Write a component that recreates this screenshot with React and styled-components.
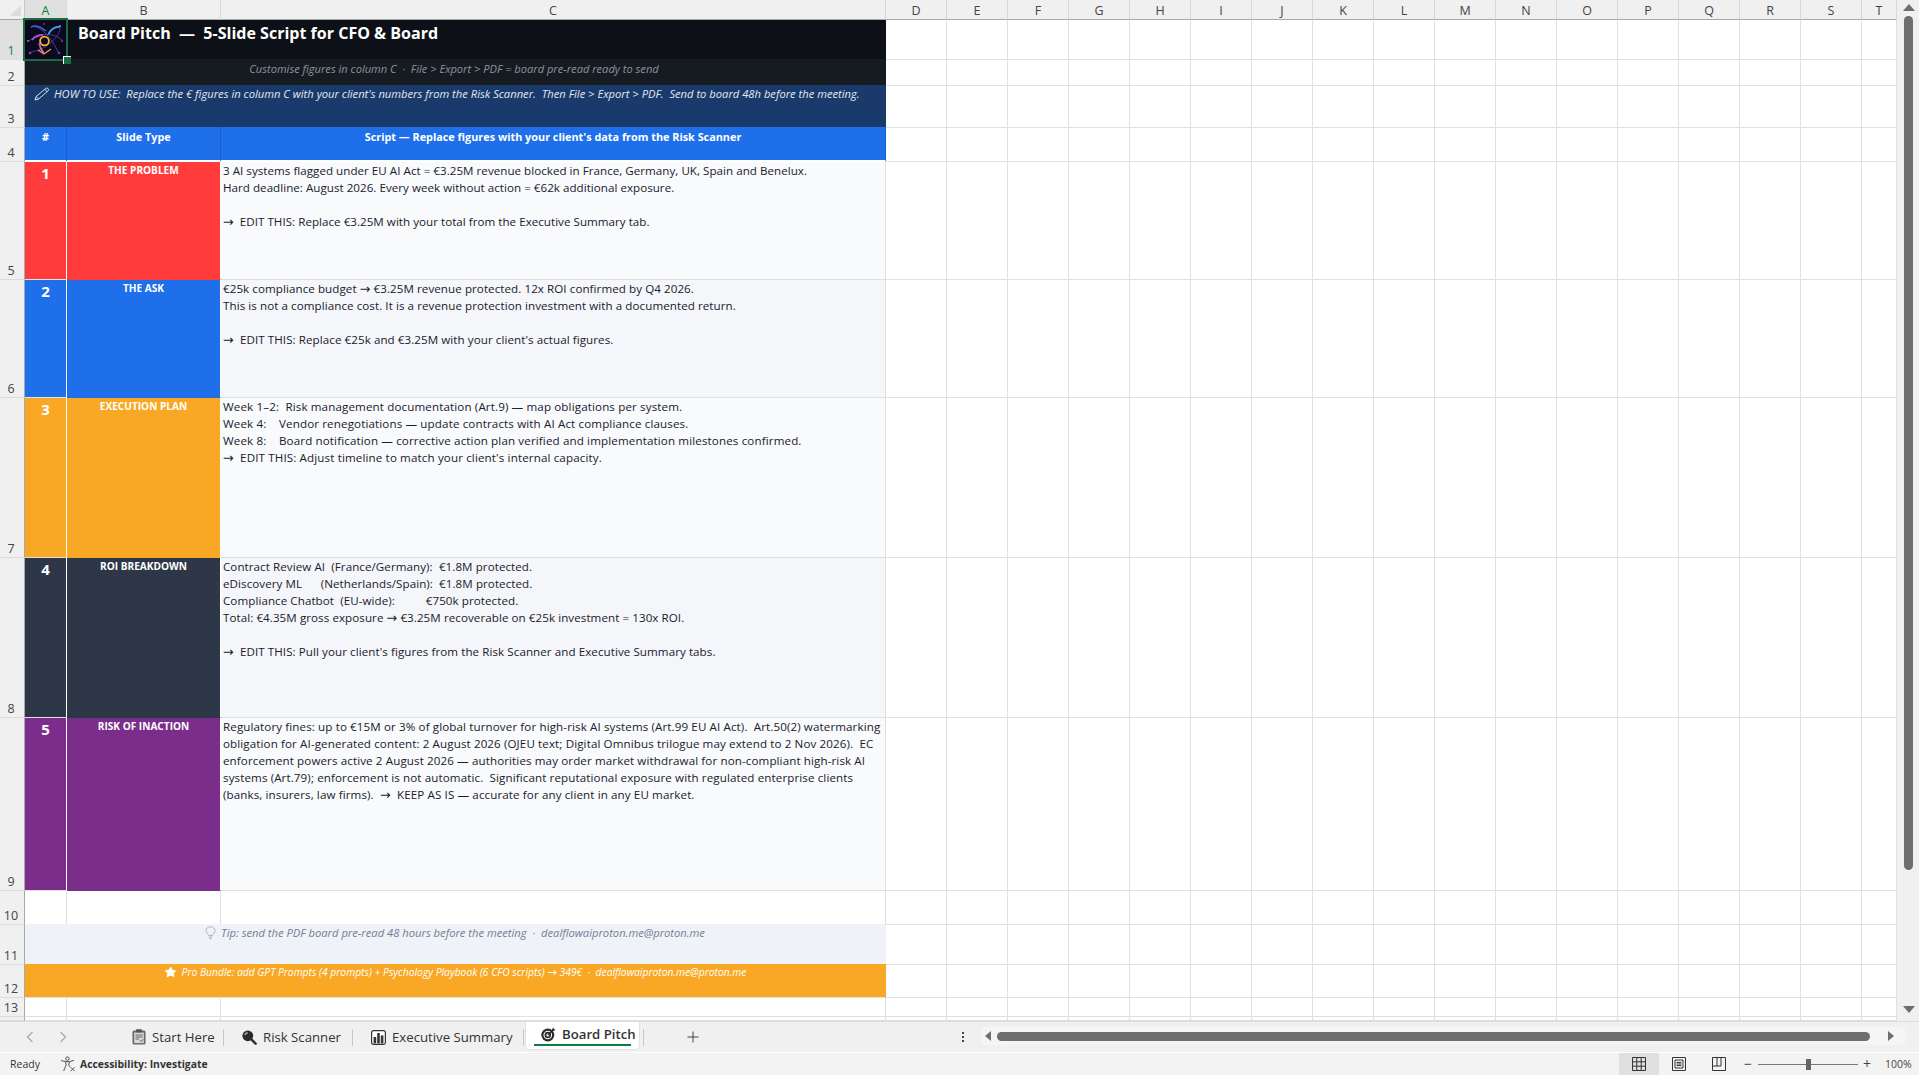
import React from "react";
import styled, { createGlobalStyle } from "styled-components";

const GlobalStyle = createGlobalStyle`
  html, body { margin: 0; padding: 0; background: #fff; }
  body { font-family: "Open Sans", "Noto Sans", "Liberation Sans", sans-serif; overflow: hidden; }
  * { box-sizing: border-box; }
`;

const GRID = "#e0e0e0";
const EMPTY_COLS = "DEFGHIJKLMNOPQRST".split("");

const Page = styled.div`
  width: 1919px;
  height: 1075px;
  display: flex;
  flex-direction: column;
  overflow: hidden;
  color: #1f1f1f;
`;

const Main = styled.div`
  height: 1021px;
  display: flex;
  background: #f0f0f0;
`;

const Sheet = styled.div`
  width: 1897px;
  display: flex;
  flex-direction: column;
  background: #fff;
`;

const Row = styled.div`
  display: flex;
  flex: none;
  height: ${p => p.$h}px;
`;

const Corner = styled.div`
  width: 25px;
  background: #f0f0f0;
  border-right: 1px solid #c8c8c8;
  border-bottom: 1px solid #a8a8a8;
  position: relative;
  &::after {
    content: "";
    position: absolute;
    right: 3px;
    bottom: 3px;
    border-style: solid;
    border-width: 0 0 11px 11px;
    border-color: transparent transparent #dcdcdc transparent;
  }
`;

const ColHead = styled.div`
  width: ${p => p.$w}px;
  background: ${p => (p.$active ? "#e0e0e0" : "#f0f0f0")};
  border-right: 1px solid #d8d8d8;
  border-bottom: 1px solid #a8a8a8;
  color: ${p => (p.$active ? "#107c41" : "#444")};
  font-size: 12.5px;
  line-height: 19px;
  padding-top: 1px;
  text-align: center;
`;

const RowHead = styled.div`
  width: 25px;
  flex: none;
  background: ${p => (p.$active ? "#e0e0e0" : "#f0f0f0")};
  border-right: 1px solid #a8a8a8;
  border-bottom: 1px solid #dcdcdc;
  color: ${p => (p.$active ? "#107c41" : "#444")};
  font-size: 12.5px;
  line-height: 16px;
  display: flex;
  align-items: flex-end;
  justify-content: center;
  padding: 0 2px 0 0;
`;

const Cell = styled.div`
  width: ${p => p.$w}px;
  flex: none;
  position: relative;
  background: ${p => p.$bg || "#fff"};
  border-right: 1px solid ${p => p.$line || GRID};
  border-bottom: 1px solid ${p => p.$under || GRID};
`;

/* merged A:C rows paint over the grid line of the row above */
const Band = styled(Cell)`
  margin-top: -1px;
  border-right-color: ${p => p.$bg};
  border-bottom-color: ${p => p.$under || p.$bg};
  color: ${p => p.$color || "#fff"};
  font-size: ${p => p.$size || 11.2}px;
  font-style: italic;
  line-height: 14px;
  text-align: center;
  white-space: pre;
  padding-top: ${p => p.$top || 0}px;
`;

const Subtitle = styled(Band)`
  font-size: 11.1px;
  padding-right: 2px;
`;

const Selection = styled.div`
  position: absolute;
  left: -2px;
  top: -2px;
  width: 45px;
  height: 43px;
  border: 2px solid #1d6b42;
  z-index: 2;
  &::after {
    content: "";
    position: absolute;
    right: -5px;
    bottom: -5px;
    width: 7px;
    height: 7px;
    background: #1d6b42;
    border-left: 1px solid #fff;
    border-top: 1px solid #fff;
  }
`;

const LogoBox = styled.div`
  width: 41px;
  height: 39px;
  background: #0a0a1c;
  margin-top: 1px;
`;

const Title = styled.div`
  color: #fff;
  font-size: 16.05px;
  font-weight: 700;
  line-height: 21px;
  padding: 3px 0 0 11px;
  white-space: pre;
`;

const HowTo = styled(Band)`
  display: flex;
  align-items: flex-start;
  padding: 2px 0 0 9px;
  text-align: left;
  gap: 4px;
`;

const HeadLabel = styled(Cell)`
  margin-top: -1px;
  color: #fff;
  font-size: 10.85px;
  font-weight: 700;
  line-height: 14px;
  text-align: center;
  padding-top: 3px;
  border-bottom: 2px solid #fff;
`;

const Num = styled(Cell)`
  color: #fff;
  font-size: 15px;
  font-weight: 700;
  line-height: 20px;
  text-align: center;
  padding-top: 1px;
  border-right-color: #fff;
`;

const Kind = styled(Cell)`
  color: #fff;
  font-size: 10.1px;
  font-weight: 700;
  line-height: 14px;
  text-align: center;
  padding-top: 1px;
  border-bottom-color: ${p => p.$bg};
`;

const Script = styled(Cell)`
  color: #1a202c;
  font-size: 11.6px;
  padding-left: 2px;
  letter-spacing: ${p => p.$track}px;
`;

const ScriptLine = styled.div`
  height: 17px;
  line-height: 17px;
  white-space: pre;
`;

const Arrow = styled.span`
  font-family: "DejaVu Sans", sans-serif;
  font-size: 1.1em;
  line-height: 1;
`;

const Inline = styled.span`
  display: inline-flex;
  align-items: center;
  justify-content: center;
  gap: 5px;
`;

const VBar = styled.div`
  width: 22px;
  display: flex;
  flex-direction: column;
  align-items: center;
  padding: 4px 0 0 1px;
  background: #f0f0f0;
`;

const ArrowUp = styled.div`
  border-style: solid;
  border-width: 0 6px 7px 6px;
  border-color: transparent transparent #6e6e6e transparent;
`;

const ArrowDown = styled(ArrowUp)`
  border-width: 7px 6px 0 6px;
  border-color: #6e6e6e transparent transparent transparent;
  margin-top: 136px;
`;

const VThumb = styled.div`
  width: 9px;
  height: 854px;
  margin-top: 5px;
  border-radius: 5px;
  background: #6e6e6e;
`;

const TabBar = styled.div`
  height: 32px;
  display: flex;
  align-items: stretch;
  background: #f0f0f0;
  border-top: 1px solid #dcdcdc;
  border-bottom: 1px solid #fff;
`;

const NavBtns = styled.div`
  width: 127px;
  display: flex;
  align-items: center;
  padding-left: 26px;
  gap: 25px;
  color: #a0a0a0;
`;

const Tab = styled.div`
  width: ${p => p.$w}px;
  display: flex;
  align-items: center;
  gap: 6px;
  padding-left: ${p => p.$pad}px;
  font-size: 13.2px;
  color: #333;
  position: relative;
  &::after {
    content: "";
    position: absolute;
    right: 0;
    top: 7px;
    height: 17px;
    width: 1px;
    background: #c8c8c8;
  }
`;

const ActiveTab = styled.div`
  width: 115px;
  height: 28px;
  margin-left: 1px;
  display: flex;
  align-items: center;
  gap: 6px;
  padding: 0 0 3px 15px;
  background: #fff;
  border: 1px solid #e2e2e2;
  border-top: 0;
  border-radius: 0 0 5px 5px;
  font-size: 13.2px;
  font-weight: 600;
  color: #333;
  position: relative;
  &::after {
    content: "";
    position: absolute;
    left: 8px;
    bottom: 3px;
    width: 97px;
    height: 2px;
    background: #107c41;
  }
`;

const TabEnd = styled.div`
  width: 1px;
  height: 17px;
  margin: 7px 0 0 3px;
  background: #c8c8c8;
`;

const AddTab = styled.div`
  width: 307px;
  padding-left: 43px;
  display: flex;
  align-items: center;
`;

const Dots = styled.div`
  width: 24px;
  display: flex;
  flex-direction: column;
  align-items: center;
  justify-content: center;
  gap: 2px;
  span {
    width: 2px;
    height: 2px;
    background: #444;
  }
`;

const HBar = styled.div`
  width: 925px;
  height: 18px;
  margin: 5px 0 0 6px;
  display: flex;
  align-items: center;
  padding-left: 4px;
  background: #f5f5f5;
  border-radius: 5px;
`;

const ArrowLeft = styled.div`
  border-style: solid;
  border-width: 5px 6px 5px 0;
  border-color: transparent #6e6e6e transparent transparent;
`;

const ArrowRight = styled.div`
  border-style: solid;
  border-width: 5px 0 5px 6px;
  border-color: transparent transparent transparent #6e6e6e;
  margin-left: 18px;
`;

const HThumb = styled.div`
  width: 873px;
  height: 9px;
  margin-left: 6px;
  border-radius: 5px;
  background: #6e6e6e;
`;

const Status = styled.div`
  height: 22px;
  display: flex;
  align-items: stretch;
  background: #f3f3f3;
  font-size: 10px;
  color: #333;
`;

const Ready = styled.div`
  width: 60px;
  padding-left: 10px;
  line-height: 23px;
  font-size: 10.5px;
`;

const Access = styled.div`
  width: 1559px;
  display: flex;
  align-items: center;
  gap: 4px;
  font-weight: 700;
  font-size: 10.4px;
`;

const ViewBtn = styled.div`
  width: 40px;
  display: flex;
  align-items: center;
  justify-content: center;
  background: ${p => (p.$on ? "#e0e0e0" : "transparent")};
`;

const Zoom = styled.div`
  flex: 1;
  display: flex;
  align-items: center;
  padding-left: 5px;
  color: #444;
  font-size: 10.5px;
`;

const ZoomSign = styled.span`
  font-size: 14px;
  line-height: 14px;
`;

const Track = styled.div`
  width: 100px;
  height: 1px;
  margin: 0 5px 0 6px;
  background: #777;
  position: relative;
`;

const Knob = styled.div`
  position: absolute;
  left: 48px;
  top: -5px;
  width: 5px;
  height: 11px;
  background: #666;
`;

const Pct = styled.div`
  margin-left: 14px;
`;

const PencilIcon = () => (
  <svg width="16" height="14" viewBox="0 0 16 14" fill="none" stroke="#e8eefa" strokeWidth="0.9">
    <path d="M1 13 L2 9.6 L11.6 1.6 C12.4 1 13.4 1 14.1 1.6 C14.8 2.4 14.7 3.2 14 3.9 L4.6 12 Z M2 9.6 L4.6 12 M10.8 2.4 L13.2 4.6" />
  </svg>
);

const BulbIcon = () => (
  <svg width="11" height="14" viewBox="0 0 11 14" fill="none" stroke="#a9b4c4" strokeWidth="1">
    <path d="M3.6 9.6 C3.6 8 1 7 1 4.4 C1 2.2 3 .8 5.4 .8 C8 .8 10 2.4 10 4.6 C10 7 7.4 8 7.4 9.6 Z M3.8 11.2 H7.2 M4.4 12.8 H6.6" />
  </svg>
);

const StarIcon = () => (
  <svg width="13" height="12" viewBox="0 0 13 12" fill="#fff">
    <path d="M6.8 .4 L8.7 3.9 L12.6 4.4 L9.8 7.2 L10.6 11.3 L6.6 9.4 L2.7 11.4 L3.3 7.2 L.4 4.5 L4.6 3.8 Z" />
  </svg>
);

const ClipIcon = () => (
  <svg width="14" height="16" viewBox="0 0 14 16">
    <rect x="0.5" y="1.5" width="13" height="14" rx="1.5" fill="#666" />
    <rect x="2.2" y="3.5" width="9.6" height="10.6" fill="#d9d9d9" />
    <rect x="4" y="0.3" width="6" height="3.2" rx="0.8" fill="#555" />
    <path d="M3.5 6 H10.5 M3.5 8 H10.5 M3.5 10 H7" stroke="#666" strokeWidth="1" />
    <path d="M8 11.5 L9 12.6 L11 10.4" stroke="#555" strokeWidth="1" fill="none" />
  </svg>
);

const LensIcon = () => (
  <svg width="15" height="15" viewBox="0 0 15 15">
    <circle cx="5.8" cy="5.8" r="5.4" fill="#2b2b2b" />
    <path d="M3 5 C3.2 3.6 4.4 2.8 5.8 2.8" stroke="#bbb" strokeWidth="1.3" fill="none" />
    <path d="M9.6 9.6 L13.6 13.6" stroke="#333" strokeWidth="2.6" strokeLinecap="round" />
  </svg>
);

const ChartIcon = () => (
  <svg width="15" height="15" viewBox="0 0 15 15">
    <rect x="0.6" y="0.6" width="13.8" height="13.8" rx="1.8" fill="#fff" stroke="#333" strokeWidth="1.2" />
    <rect x="2.6" y="7" width="2.6" height="6.4" fill="#333" />
    <rect x="6.2" y="3" width="2.6" height="10.4" fill="#333" />
    <rect x="9.8" y="5.4" width="2.6" height="8" fill="#333" />
  </svg>
);

const TargetIcon = () => (
  <svg width="15" height="15" viewBox="0 0 15 15">
    <circle cx="6.8" cy="8" r="6.5" fill="#2a2a2a" />
    <circle cx="6.8" cy="8" r="3.8" fill="none" stroke="#fff" strokeWidth="1.1" />
    <circle cx="6.8" cy="8" r="1.5" fill="#fff" />
    <path d="M7 8 L12.4 2.6" stroke="#2a2a2a" strokeWidth="1.4" />
    <path d="M11 2.2 L12.4 .6 L12.8 2.2 L14.6 2.6 L13 4 L11.4 3.8 Z" fill="#2a2a2a" />
  </svg>
);

const AccessIcon = () => (
  <svg width="16" height="16" viewBox="0 0 16 16" fill="none" stroke="#444" strokeWidth="0.9">
    <circle cx="7.4" cy="2.6" r="1.7" />
    <path d="M1 4.6 L5.6 5.6 H9.4 L14 4.4 M5.6 5.6 L6.2 9 L3.6 15 M9.4 5.6 L8.8 9 L9.8 11" />
    <path d="M10.6 11.2 L14.6 15.2 M14.6 11.2 L10.6 15.2" />
  </svg>
);

const Chevron = ({ dir }) => (
  <svg width="8" height="12" viewBox="0 0 8 12" fill="none" stroke="#a6a6a6" strokeWidth="1.2">
    <path d={dir === "left" ? "M6.5 1 L1.5 6 L6.5 11" : "M1.5 1 L6.5 6 L1.5 11"} />
  </svg>
);

const PlusIcon = () => (
  <svg width="12" height="12" viewBox="0 0 12 12" stroke="#444" strokeWidth="1">
    <path d="M6 0.5 V11.5 M0.5 6 H11.5" />
  </svg>
);

const GridIcon = () => (
  <svg width="14" height="14" viewBox="0 0 14 14" fill="none" stroke="#333" strokeWidth="1">
    <path d="M.5 .5 H13.5 V13.5 H.5 Z M.5 4.8 H13.5 M.5 9.2 H13.5 M4.8 .5 V13.5 M9.2 .5 V13.5" />
  </svg>
);

const PageIcon = () => (
  <svg width="14" height="14" viewBox="0 0 14 14" fill="none" stroke="#333" strokeWidth="1">
    <path d="M.5 .5 H13.5 V13.5 H.5 Z M3 3 H11 V11 H3 Z M4.6 5.4 H9.4 M4.6 7 H9.4 M4.6 8.6 H9.4" />
  </svg>
);

const BreakIcon = () => (
  <svg width="14" height="14" viewBox="0 0 14 14" fill="none" stroke="#333" strokeWidth="1">
    <path d="M.5 .5 H13.5 V13.5 H.5 Z M.5 9 H9 V.5 M5 .5 V9" />
  </svg>
);

const Logo = () => (
  <svg width="41" height="39" viewBox="0 0 41 39" fill="none">
    <defs>
      <linearGradient id="pinkArc" x1="0" y1="0" x2="0" y2="1">
        <stop offset="0" stopColor="#a24be0" />
        <stop offset="1" stopColor="#f08a70" />
      </linearGradient>
    </defs>
    <path d="M6 6 C14 3 27 17 33 31" stroke="#3c4fb8" strokeWidth="0.9" />
    <path d="M6 6 C10 4 16 6 21 10" stroke="#4660d4" strokeWidth="1.6" />
    <path d="M35 6 C36 16 20 29 6 31" stroke="#4b3aa8" strokeWidth="0.9" />
    <path d="M35 6 C30 5 25 9 23 14" stroke="#46a6ee" strokeWidth="1.7" />
    <path d="M4 20 C12 13 26 10 37 19" stroke="#5e3aa8" strokeWidth="0.9" />
    <path d="M7 19 C10 15 14 14 18 14" stroke="#a452d8" strokeWidth="1.8" />
    <path d="M19 33 L13 29 M19 33 L26 28" stroke="#ef8f6a" strokeWidth="1.5" />
    <path d="M14 22 C15 27 17 30 19 33" stroke="url(#pinkArc)" strokeWidth="1.8" />
    <circle cx="19.5" cy="20" r="4.4" stroke="#f6b42c" strokeWidth="1.8" />
    <circle cx="19" cy="3" r="0.9" fill="#6a45c0" />
    <circle cx="35" cy="5" r="1.1" fill="#46a6ee" />
    <circle cx="3" cy="20" r="1" fill="#c060c0" />
    <circle cx="37" cy="20" r="1" fill="#6a45c0" />
    <circle cx="5" cy="32" r="1.3" fill="#7a45c6" />
    <circle cx="34" cy="32" r="1.3" fill="#5a45c0" />
  </svg>
);

const EmptyCells = () =>
  EMPTY_COLS.map(c => <Cell key={c} $w={c === "T" ? 35 : 61} />);

// arrows come from another font than the rest of the text
const withArrows = text =>
  text.split("→").map((part, i) => (
    <React.Fragment key={i}>
      {i > 0 && <Arrow>→</Arrow>}
      {part}
    </React.Fragment>
  ));

const slides = [
  {
    n: 1,
    h: 118,
    color: "#ff3b3b",
    kind: "THE PROBLEM",
    bg: "#f8fafc",
    track: 0.03,
    text: "3 AI systems flagged under EU AI Act = €3.25M revenue blocked in France, Germany, UK, Spain and Benelux.\nHard deadline: August 2026. Every week without action = €62k additional exposure.\n\n→  EDIT THIS: Replace €3.25M with your total from the Executive Summary tab."
  },
  {
    n: 2,
    h: 118,
    color: "#1f6feb",
    kind: "THE ASK",
    bg: "#f4f6fa",
    track: 0.07,
    text: "€25k compliance budget → €3.25M revenue protected. 12x ROI confirmed by Q4 2026.\nThis is not a compliance cost. It is a revenue protection investment with a documented return.\n\n→  EDIT THIS: Replace €25k and €3.25M with your client's actual figures."
  },
  {
    n: 3,
    h: 160,
    color: "#f9a825",
    kind: "EXECUTION PLAN",
    bg: "#f8fafc",
    track: 0.13,
    text: "Week 1–2:  Risk management documentation (Art.9) — map obligations per system.\nWeek 4:    Vendor renegotiations — update contracts with AI Act compliance clauses.\nWeek 8:    Board notification — corrective action plan verified and implementation milestones confirmed.\n→  EDIT THIS: Adjust timeline to match your client's internal capacity."
  },
  {
    n: 4,
    h: 160,
    color: "#2d3748",
    kind: "ROI BREAKDOWN",
    bg: "#f4f6fa",
    track: 0.07,
    text: "Contract Review AI  (France/Germany):  €1.8M protected.\neDiscovery ML      (Netherlands/Spain):  €1.8M protected.\nCompliance Chatbot  (EU-wide):          €750k protected.\nTotal: €4.35M gross exposure → €3.25M recoverable on €25k investment = 130x ROI.\n\n→  EDIT THIS: Pull your client's figures from the Risk Scanner and Executive Summary tabs."
  },
  {
    n: 5,
    h: 173,
    color: "#7b2d8b",
    kind: "RISK OF INACTION",
    bg: "#f8fafc",
    track: 0.11,
    text: "Regulatory fines: up to €15M or 3% of global turnover for high-risk AI systems (Art.99 EU AI Act).  Art.50(2) watermarking\nobligation for AI-generated content: 2 August 2026 (OJEU text; Digital Omnibus trilogue may extend to 2 Nov 2026).  EC\nenforcement powers active 2 August 2026 — authorities may order market withdrawal for non-compliant high-risk AI\nsystems (Art.79); enforcement is not automatic.  Significant reputational exposure with regulated enterprise clients\n(banks, insurers, law firms).  →  KEEP AS IS — accurate for any client in any EU market."
  }
];

export default function App() {
  return (
    <Page>
      <GlobalStyle />
      <Main>
        <Sheet>
          <Row $h={20}>
            <Corner />
            <ColHead $w={42} $active>A</ColHead>
            <ColHead $w={154}>B</ColHead>
            <ColHead $w={665}>C</ColHead>
            {EMPTY_COLS.map(c => (
              <ColHead key={c} $w={c === "T" ? 35 : 61}>{c}</ColHead>
            ))}
          </Row>

          <Row $h={40}>
            <RowHead $active>1</RowHead>
            <Cell $w={42} $bg="#0d1117" $line="#0d1117" $under="#0d1117">
              <LogoBox><Logo /></LogoBox>
              <Selection />
            </Cell>
            <Cell $w={819} $bg="#0d1117" $line="#0d1117" $under="#0d1117">
              <Title>Board Pitch  —  5-Slide Script for CFO &amp; Board</Title>
            </Cell>
            <EmptyCells />
          </Row>

          <Row $h={26}>
            <RowHead>2</RowHead>
            <Subtitle $w={861} $bg="#161b22" $color="#8b949e" $top={3}>
              Customise figures in column C  ·  File &gt; Export &gt; PDF = board pre-read ready to send
            </Subtitle>
            <EmptyCells />
          </Row>

          <Row $h={42}>
            <RowHead>3</RowHead>
            <HowTo $w={861} $bg="#1a3a6b" $color="#e2e8f0">
              <PencilIcon />
              <span>HOW TO USE:  Replace the € figures in column C with your client's numbers from the Risk Scanner.  Then File &gt; Export &gt; PDF.  Send to board 48h before the meeting.</span>
            </HowTo>
            <EmptyCells />
          </Row>

          <Row $h={34}>
            <RowHead>4</RowHead>
            <HeadLabel $w={42} $bg="#1f6feb" $line="#1a5ec8">#</HeadLabel>
            <HeadLabel $w={154} $bg="#1f6feb" $line="#1a5ec8">Slide Type</HeadLabel>
            <HeadLabel $w={665} $bg="#1f6feb" $line="#1a5ec8">
              Script — Replace figures with your client's data from the Risk Scanner
            </HeadLabel>
            <EmptyCells />
          </Row>

          {slides.map((s, i) => (
            <Row $h={s.h} key={s.n}>
              <RowHead>{i + 5}</RowHead>
              <Num $w={42} $bg={s.color}>{s.n}</Num>
              <Kind $w={154} $bg={s.color} $line="#fff">{s.kind}</Kind>
              <Script $w={665} $bg={s.bg} $track={s.track}>
                {s.text.split("\n").map((line, j) => (
                  <ScriptLine key={j}>{withArrows(line)}</ScriptLine>
                ))}
              </Script>
              <EmptyCells />
            </Row>
          ))}

          <Row $h={34}>
            <RowHead>10</RowHead>
            <Cell $w={42} />
            <Cell $w={154} />
            <Cell $w={665} />
            <EmptyCells />
          </Row>

          <Row $h={40}>
            <RowHead>11</RowHead>
            <Band $w={861} $bg="#eff2f7" $color="#718096" $top={2}>
              <Inline>
                <BulbIcon />
                <span>Tip: send the PDF board pre-read 48 hours before the meeting  ·  dealflowaiproton.me@proton.me</span>
              </Inline>
            </Band>
            <EmptyCells />
          </Row>

          <Row $h={33}>
            <RowHead>12</RowHead>
            <Band $w={861} $bg="#f9a825" $under={GRID} $size={10.3} $top={1}>
              <Inline>
                <StarIcon />
                <span>{withArrows("Pro Bundle: add GPT Prompts (4 prompts) + Psychology Playbook (6 CFO scripts) → 349€  ·  dealflowaiproton.me@proton.me")}</span>
              </Inline>
            </Band>
            <EmptyCells />
          </Row>

          <Row $h={19}>
            <RowHead>13</RowHead>
            <Cell $w={42} />
            <Cell $w={154} />
            <Cell $w={665} />
            <EmptyCells />
          </Row>

          <Row $h={4}>
            <RowHead />
            <Cell $w={42} />
            <Cell $w={154} />
            <Cell $w={665} />
            <EmptyCells />
          </Row>
        </Sheet>
        <VBar>
          <ArrowUp />
          <VThumb />
          <ArrowDown />
        </VBar>
      </Main>

      <TabBar>
        <NavBtns>
          <Chevron dir="left" />
          <Chevron dir="right" />
        </NavBtns>
        <Tab $w={97} $pad={5}><ClipIcon />Start Here</Tab>
        <Tab $w={129} $pad={18}><LensIcon />Risk Scanner</Tab>
        <Tab $w={171} $pad={18}><ChartIcon />Executive Summary</Tab>
        <ActiveTab><TargetIcon />Board Pitch</ActiveTab>
        <TabEnd />
        <AddTab><PlusIcon /></AddTab>
        <Dots><span /><span /><span /></Dots>
        <HBar>
          <ArrowLeft />
          <HThumb />
          <ArrowRight />
        </HBar>
      </TabBar>

      <Status>
        <Ready>Ready</Ready>
        <Access><AccessIcon />Accessibility: Investigate</Access>
        <ViewBtn $on><GridIcon /></ViewBtn>
        <ViewBtn><PageIcon /></ViewBtn>
        <ViewBtn><BreakIcon /></ViewBtn>
        <Zoom>
          <ZoomSign>−</ZoomSign>
          <Track><Knob /></Track>
          <ZoomSign>+</ZoomSign>
          <Pct>100%</Pct>
        </Zoom>
      </Status>
    </Page>
  );
}
